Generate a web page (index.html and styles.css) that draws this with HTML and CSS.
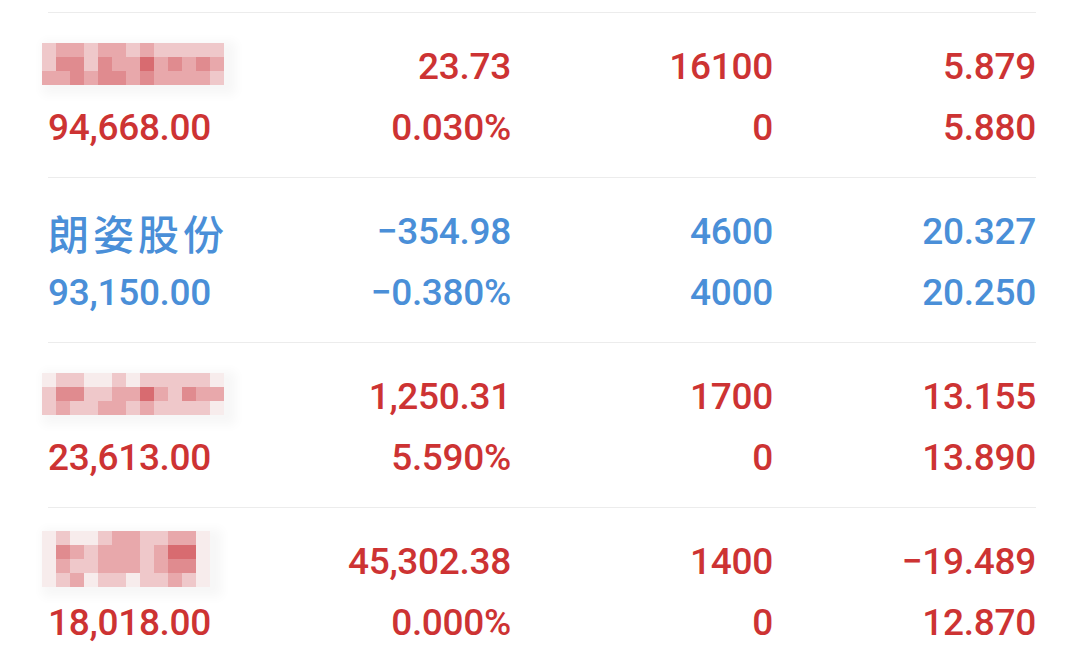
FILE: index.html
```html
<!DOCTYPE html>
<html lang="zh-CN">
<head>
<meta charset="utf-8">
<title>持仓</title>
<link rel="stylesheet" href="styles.css">
</head>
<body>
<div class="list">
  <div class="row up">
    <div class="cell name">
      <div class="mosaic c13">
        <i class="a"></i><i class="b"></i><i class="b"></i><i class="a"></i><i class="b"></i><i class="b"></i><i class="a"></i><i class="b"></i><i class="a"></i><i class="a"></i><i class="a"></i><i class="a"></i><i class="a"></i>
        <i class="a"></i><i class="c"></i><i class="c"></i><i class="a"></i><i class="c"></i><i class="b"></i><i class="b"></i><i class="d"></i><i class="b"></i><i class="c"></i><i class="b"></i><i class="c"></i><i class="b"></i>
        <i class="b"></i><i class="b"></i><i class="c"></i><i class="b"></i><i class="c"></i><i class="c"></i><i class="b"></i><i class="c"></i><i class="b"></i><i class="b"></i><i class="b"></i><i class="b"></i><i class="a"></i>
      </div>
    </div>
    <div class="cell">23.73</div>
    <div class="cell">16100</div>
    <div class="cell">5.879</div>
    <div class="cell">94,668.00</div>
    <div class="cell">0.030%</div>
    <div class="cell">0</div>
    <div class="cell">5.880</div>
  </div>
  <div class="row down">
    <div class="cell name">朗姿股份</div>
    <div class="cell">−354.98</div>
    <div class="cell">4600</div>
    <div class="cell">20.327</div>
    <div class="cell">93,150.00</div>
    <div class="cell">−0.380%</div>
    <div class="cell">4000</div>
    <div class="cell">20.250</div>
  </div>
  <div class="row up">
    <div class="cell name">
      <div class="mosaic c13">
        <i class="w"></i><i class="a"></i><i class="a"></i><i class="w"></i><i class="w"></i><i class="a"></i><i class="w"></i><i class="a"></i><i class="a"></i><i class="a"></i><i class="a"></i><i class="a"></i><i class="w"></i>
        <i class="a"></i><i class="c"></i><i class="c"></i><i class="a"></i><i class="a"></i><i class="b"></i><i class="b"></i><i class="d"></i><i class="b"></i><i class="a"></i><i class="c"></i><i class="b"></i><i class="b"></i>
        <i class="a"></i><i class="b"></i><i class="a"></i><i class="a"></i><i class="b"></i><i class="b"></i><i class="a"></i><i class="b"></i><i class="a"></i><i class="a"></i><i class="a"></i><i class="a"></i><i class="w"></i>
      </div>
    </div>
    <div class="cell">1,250.31</div>
    <div class="cell">1700</div>
    <div class="cell">13.155</div>
    <div class="cell">23,613.00</div>
    <div class="cell">5.590%</div>
    <div class="cell">0</div>
    <div class="cell">13.890</div>
  </div>
  <div class="row up">
    <div class="cell name">
      <div class="mosaic c12">
        <i class="w"></i><i class="a"></i><i class="w"></i><i class="w"></i><i class="a"></i><i class="b"></i><i class="b"></i><i class="a"></i><i class="a"></i><i class="b"></i><i class="b"></i><i class="w"></i>
        <i class="w"></i><i class="c"></i><i class="b"></i><i class="a"></i><i class="b"></i><i class="b"></i><i class="b"></i><i class="a"></i><i class="b"></i><i class="d"></i><i class="d"></i><i class="w"></i>
        <i class="w"></i><i class="b"></i><i class="a"></i><i class="a"></i><i class="b"></i><i class="b"></i><i class="b"></i><i class="a"></i><i class="b"></i><i class="c"></i><i class="c"></i><i class="w"></i>
        <i class="w"></i><i class="a"></i><i class="b"></i><i class="w"></i><i class="a"></i><i class="a"></i><i class="w"></i><i class="a"></i><i class="a"></i><i class="b"></i><i class="a"></i><i class="w"></i>
      </div>
    </div>
    <div class="cell">45,302.38</div>
    <div class="cell">1400</div>
    <div class="cell">−19.489</div>
    <div class="cell">18,018.00</div>
    <div class="cell">0.000%</div>
    <div class="cell">0</div>
    <div class="cell">12.870</div>
  </div>
</div>
</body>
</html>
```
FILE: styles.css
```css
html, body {
  margin: 0;
  padding: 0;
  background: #ffffff;
}
body {
  font-family: Roboto, "Noto Sans CJK SC", sans-serif;
  overflow: hidden;
}
.list {
  padding-top: 12px;
  margin-left: 48px;
  width: 988px;
}
.row {
  display: grid;
  grid-template-columns: 200px 263px 262px 263px;
  grid-auto-rows: 61px;
  border-top: 1px solid #ececec;
  padding: 23px 0 19px;
  font-size: 37px;
  font-weight: 500;
}
.row.up { color: #cd3333; }
.row.down { color: #4a8fd8; }
.cell {
  display: flex;
  align-items: center;
  justify-content: flex-end;
  white-space: nowrap;
  letter-spacing: -0.3px;
}
.cell.name,
.row .cell:nth-child(5) {
  justify-content: flex-start;
}
.cell.name {
  font-family: "Noto Sans CJK SC", sans-serif;
  font-size: 41px;
  letter-spacing: 4px;
}
.mosaic {
  display: grid;
  grid-auto-rows: 14px;
  margin-left: -6px;
  margin-top: -6px;
  box-shadow: 6px 4px 10px 6px #f7f7f7;
}
.mosaic.c13 { grid-template-columns: repeat(13, 14px); }
.mosaic.c12 { grid-template-columns: repeat(12, 14px); }
.mosaic i { display: block; }
.mosaic .w { background: #f7ecec; }
.mosaic .a { background: #efc8ca; }
.mosaic .b { background: #e8a8ab; }
.mosaic .c { background: #e08b8f; }
.mosaic .d { background: #d86b70; }
```
